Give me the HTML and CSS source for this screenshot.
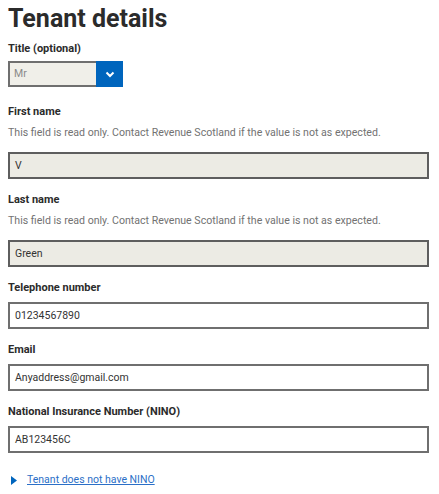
FILE: index.html
```html
<!DOCTYPE html>
<html lang="en">
<head>
<meta charset="utf-8">
<title>Tenant details</title>
<link rel="stylesheet" href="styles.css">
</head>
<body>
<main class="page">
  <h1 class="title">Tenant details</h1>

  <div class="field field-select">
    <label class="label" for="title">Title (optional)</label>
    <div class="select">
      <span class="select-value">Mr</span>
      <span class="select-button">
        <svg width="10" height="7" viewBox="0 0 10 7" aria-hidden="true"><path d="M1.5 1.5 L5 5 L8.5 1.5" fill="none" stroke="#fff" stroke-width="2"/></svg>
      </span>
    </div>
  </div>

  <div class="field">
    <label class="label">First name</label>
    <p class="hint">This field is read only. Contact Revenue Scotland if the value is not as expected.</p>
    <div class="input readonly">V</div>
  </div>

  <div class="field">
    <label class="label">Last name</label>
    <p class="hint">This field is read only. Contact Revenue Scotland if the value is not as expected.</p>
    <div class="input readonly">Green</div>
  </div>

  <div class="field">
    <label class="label">Telephone number</label>
    <div class="input">01234567890</div>
  </div>

  <div class="field">
    <label class="label">Email</label>
    <div class="input">Anyaddress@gmail.com</div>
  </div>

  <div class="field">
    <label class="label">National Insurance Number (NINO)</label>
    <div class="input">AB123456C</div>
  </div>

  <div class="details">
    <svg class="details-arrow" width="6" height="9" viewBox="0 0 6 9" aria-hidden="true"><path d="M0 0 L6 4.5 L0 9 Z" fill="#0065bd"/></svg>
    <a class="details-link" href="#">Tenant does not have NINO</a>
  </div>
</main>
</body>
</html>
```

FILE: styles.css
```css
html, body {
  margin: 0;
  padding: 0;
  background: #ffffff;
}

body {
  font-family: Roboto, "Liberation Sans", sans-serif;
  color: #333333;
}

.page {
  padding: 4px 10px 0 8px;
}

.title {
  font-size: 25px;
  font-weight: 700;
  line-height: 30px;
  margin: 0 0 8px;
  color: #2b2b2b;
}

.field {
  margin-bottom: 14px;
}

.field-select {
  margin-bottom: 18px;
}

.label {
  display: block;
  font-size: 11px;
  font-weight: 700;
  line-height: 14px;
  margin-bottom: 7px;
  color: #2b2b2b;
}

.field-select .label {
  margin-bottom: 5px;
}

.hint {
  font-size: 10.6px;
  line-height: 14px;
  color: #727272;
  margin: 1px 0 12px;
}

.select {
  display: flex;
  width: 115px;
  height: 26px;
  box-sizing: border-box;
  border: 2px solid #6f6f6f;
  border-right: none;
  background: #f0efe9;
}

.select-value {
  flex: 1;
  font-size: 10.5px;
  line-height: 22px;
  padding-left: 4px;
  color: #8a8a8a;
}

.select-button {
  width: 27px;
  margin: -2px 0;
  background: #0065bd;
  display: flex;
  align-items: center;
  justify-content: center;
}

.input {
  height: 27px;
  box-sizing: border-box;
  border: 2px solid #6f6f6f;
  padding: 0 5px;
  font-size: 10.5px;
  line-height: 23px;
  color: #333333;
  background: #ffffff;
}

.input.readonly {
  background: #ecebe4;
  border-color: #5e5e5e;
}

.details {
  display: flex;
  align-items: center;
  gap: 10px;
  padding-left: 3px;
  margin-top: 20px;
}

.details-link {
  font-size: 10.5px;
  line-height: 14px;
  color: #2b6fc7;
  text-decoration: underline;
}
```
